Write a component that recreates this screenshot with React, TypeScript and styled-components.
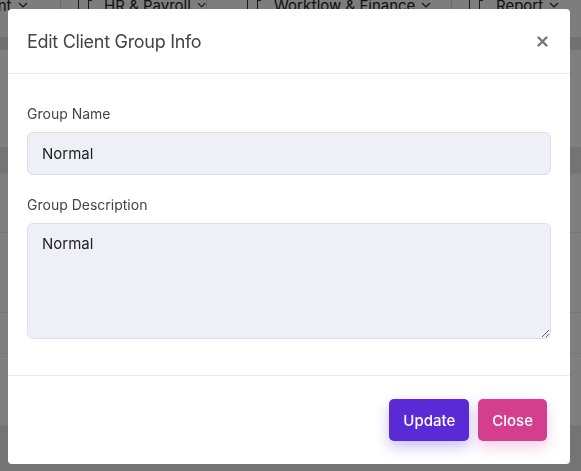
import React from 'react';
import styled, { createGlobalStyle } from 'styled-components';

const GlobalStyle = createGlobalStyle`
  html, body {
    margin: 0;
    padding: 0;
    background: #fff;
    font-family: 'Inter', 'Open Sans', sans-serif;
  }
`;

const Page = styled.div`
  width: 581px;
  height: 471px;
  overflow: hidden;
  background: #fff;
`;

const TabBar = styled.div`
  height: 37px;
  display: flex;
  align-items: flex-start;
  background: #fbfbfb;
  border-bottom: 13px solid #e2e2e2;
`;

const Tab = styled.div<{ $width: number; $indent: number }>`
  width: ${({ $width }) => $width}px;
  flex: none;
  display: flex;
  align-items: center;
  height: 30px;
  margin-top: -10px;
  padding-left: ${({ $indent }) => Math.max($indent, 0)}px;
  box-sizing: border-box;
  border-right: 1px solid #d6d6d6;
  font-size: 15px;
  color: #222;
  white-space: nowrap;

  &:first-child {
    justify-content: flex-start;
    text-indent: -11px;
  }

  svg {
    margin-left: 6px;
  }
`;

const TabText = styled.span<{ $shift: number }>`
  margin-left: ${({ $shift }) => $shift}px;
`;

const TabIcon = styled.span`
  width: 10px;
  height: 16px;
  margin-right: 16px;
  border-left: 1px solid #333;
  position: relative;

  &::after {
    content: '';
    position: absolute;
    left: 9px;
    top: 3px;
    width: 3px;
    height: 11px;
    border-left: 1px solid #333;
    border-top: 1px solid #333;
  }
`;

const Row = styled.div<{ $shade?: boolean; $height: number }>`
  height: ${({ $height }) => $height}px;
  background: ${({ $shade }) => ($shade ? '#e8e8e8' : '#fff')};
  border-bottom: 1px solid #ececec;
`;

const Overlay = styled.div`
  position: fixed;
  inset: 0;
  background: rgba(0, 0, 0, 0.5);
  padding: 9px 0 0 8px;
`;

const Modal = styled.div`
  width: 562px;
  height: 455px;
  background: #fff;
  border-radius: 4px;
  display: flex;
  flex-direction: column;
  overflow: hidden;
`;

const Header = styled.div`
  height: 64px;
  display: flex;
  align-items: center;
  justify-content: space-between;
  padding: 0 21px 0 19px;
  border-bottom: 1px solid #e9e9ef;
`;

const Title = styled.h5`
  margin: 0;
  font-size: 18px;
  font-weight: 400;
  color: #444;
  letter-spacing: -0.3px;
`;

const CloseX = styled.button`
  border: none;
  background: none;
  padding: 0;
  width: 14px;
  height: 14px;
  display: flex;
  align-items: center;
  justify-content: center;
`;

const Body = styled.div`
  flex: 1;
  padding: 30px 19px 0;
  display: flex;
  flex-direction: column;
`;

const Field = styled.div`
  display: flex;
  flex-direction: column;
  margin-bottom: 20px;
`;

const Label = styled.label`
  font-size: 14px;
  line-height: 20px;
  color: #444;
  margin-bottom: 8px;
`;

const inputBase = `
  box-sizing: border-box;
  width: 100%;
  background: #efeff8;
  border: 1px solid #dcdde8;
  border-radius: 6px;
  padding: 0 14px;
  font-family: 'Inter', 'Open Sans', sans-serif;
  font-size: 15px;
  color: #222;
  outline: none;
`;

const TextInput = styled.input`
  ${inputBase}
  height: 43px;
`;

const TextArea = styled.textarea`
  ${inputBase}
  height: 116px;
  padding-top: 10px;
  line-height: 20px;
  resize: vertical;
`;

const Footer = styled.div`
  height: 89px;
  box-sizing: border-box;
  border-top: 1px solid #e9e9ef;
  display: flex;
  justify-content: flex-end;
  align-items: center;
  gap: 9px;
  padding: 0 23px;
`;

const Button = styled.button<{ $color: string; $shadow: string }>`
  height: 42px;
  padding: 0 14px;
  border: none;
  border-radius: 5px;
  background: ${({ $color }) => $color};
  box-shadow: 0 6px 14px ${({ $shadow }) => $shadow};
  color: #fff;
  font-family: 'Inter', 'Open Sans', sans-serif;
  font-size: 15px;
  font-weight: 500;
`;

const tabs = [
  { label: 'ent', width: 61, indent: 0, shift: 0, icon: false },
  { label: 'HR & Payroll', width: 146, indent: 17, shift: 0, icon: true },
  { label: 'Workflow & Finance', width: 245, indent: 40, shift: 0, icon: true },
  { label: 'Report', width: 150, indent: 17, shift: 0, icon: true },
];

export default function App() {
  return (
    <>
      <GlobalStyle />
      <Page>
        <TabBar>
          {tabs.map((t) => (
            <Tab key={t.label} $width={t.width} $indent={t.indent}>
              {t.icon && <TabIcon />}
              <TabText $shift={t.shift}>{t.label}</TabText>
              <svg width="10" height="6" viewBox="0 0 10 6">
                <path d="M1 1l4 4 4-4" fill="none" stroke="#222" strokeWidth="1.2" />
              </svg>
            </Tab>
          ))}
        </TabBar>
        <Row $height={97} />
        <Row $height={25} $shade />
        <Row $height={58} />
        <Row $height={79} />
        <Row $height={40} />
        <Row $height={71} />
        <Row $height={60} $shade />
      </Page>
      <Overlay>
        <Modal>
          <Header>
            <Title>Edit Client Group Info</Title>
            <CloseX aria-label="Close">
              <svg width="11" height="11" viewBox="0 0 11 11">
                <path d="M1.5 1.5l8 8M9.5 1.5l-8 8" stroke="#777" strokeWidth="2.4" strokeLinecap="round" />
              </svg>
            </CloseX>
          </Header>
          <Body>
            <Field>
              <Label>Group Name</Label>
              <TextInput defaultValue="Normal" />
            </Field>
            <Field>
              <Label>Group Description</Label>
              <TextArea defaultValue="Normal" />
            </Field>
          </Body>
          <Footer>
            <Button $color="#5a2ad6" $shadow="rgba(90, 42, 214, 0.3)">Update</Button>
            <Button $color="#d33f8c" $shadow="rgba(211, 63, 140, 0.25)">Close</Button>
          </Footer>
        </Modal>
      </Overlay>
    </>
  );
}
